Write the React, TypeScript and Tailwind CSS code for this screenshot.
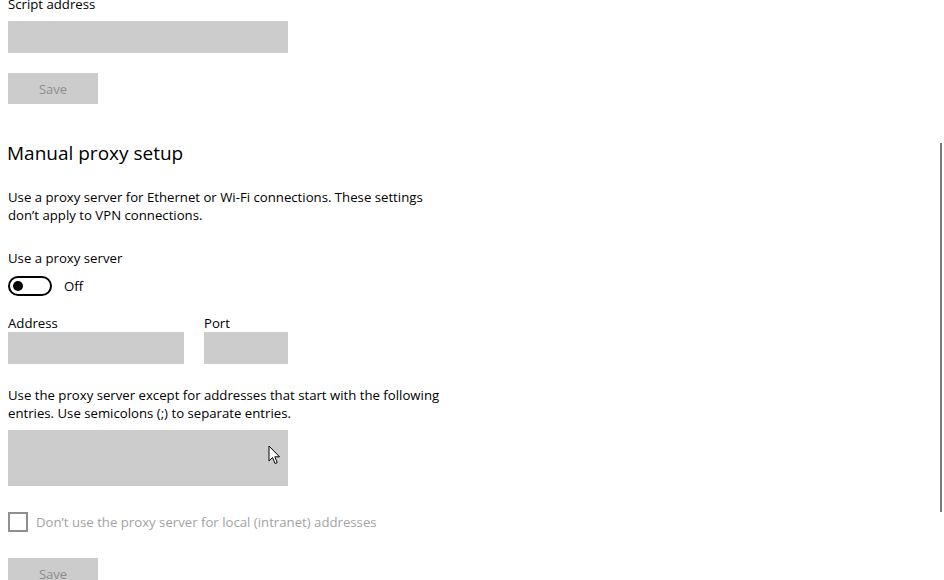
import React from 'react';

const font = { fontFamily: '"Open Sans", "Noto Sans", sans-serif' };

const Cursor = () => (
  <svg width="13" height="20" viewBox="0 0 13 20" className="absolute left-[268px] top-[445px]">
    <path d="M1 1 L1 16 L4.5 12.5 L7 18.5 L9.2 17.6 L6.8 11.8 L11.5 11.8 Z" fill="#fff" stroke="#000" strokeWidth="1" strokeLinejoin="round" />
  </svg>
);

export default function App() {
  return (
    <div className="relative w-[944px] h-[580px] overflow-hidden bg-white text-black" style={font}>
      <div className="flex flex-col items-start pl-[8px] mt-[-6px] text-[13.2px] leading-[18px]">
        <div className="leading-[20px]">Script address</div>
        <div className="mt-[7px] w-[280px] h-[32px] bg-[#cccccc]" />
        <button className="mt-[20px] w-[90px] h-[31px] bg-[#cccccc] text-[#8c8c8c] text-[13px]">Save</button>

        <h2 className="mt-[36px] -ml-[1px] text-[19px] leading-[26px] font-normal">Manual proxy setup</h2>

        <p className="mt-[22px] w-[440px]">
          Use a proxy server for Ethernet or Wi-Fi connections. These settings don’t apply to VPN connections.
        </p>

        <div className="mt-[25px]">Use a proxy server</div>
        <div className="mt-[9px] flex items-center gap-[12px]">
          <div className="w-[44px] h-[20px] rounded-full border-2 border-black flex items-center pl-[3px]">
            <div className="w-[10px] h-[10px] rounded-full bg-black" />
          </div>
          <span>Off</span>
        </div>

        <div className="mt-[18px] flex gap-[20px]">
          <div className="flex flex-col">
            <span>Address</span>
            <div className="w-[176px] h-[32px] bg-[#cccccc]" />
          </div>
          <div className="flex flex-col">
            <span>Port</span>
            <div className="w-[84px] h-[32px] bg-[#cccccc]" />
          </div>
        </div>

        <p className="mt-[22px] w-[440px]">
          Use the proxy server except for addresses that start with the following entries. Use semicolons (;) to separate entries.
        </p>
        <div className="mt-[8px] w-[280px] h-[56px] bg-[#cccccc]" />

        <label className="mt-[26px] flex items-center gap-[8px] text-[#a3a3a3]">
          <span className="w-[20px] h-[20px] border-2 border-[#8f8f8f]" />
          <span>Don’t use the proxy server for local (intranet) addresses</span>
        </label>

        <button className="mt-[26px] w-[90px] h-[31px] bg-[#cccccc] text-[#8c8c8c] text-[13px]">Save</button>
      </div>

      <div className="absolute left-[940px] top-[143px] w-[2px] h-[369px] bg-[#7a7a7a]" />
      <Cursor />
    </div>
  );
}
